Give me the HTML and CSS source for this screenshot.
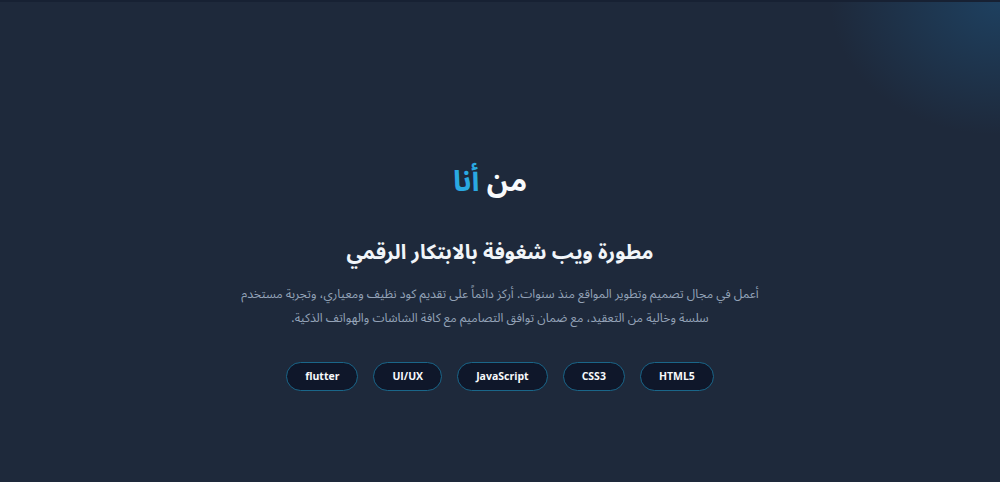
FILE: index.html
```html
<!DOCTYPE html>
<html lang="ar" dir="rtl">
<head>
<meta charset="utf-8">
<link rel="stylesheet" href="styles.css">
</head>
<body>
<section class="about">
  <h2 class="title">من <span class="accent">أنا</span></h2>
  <h3 class="subtitle">مطورة ويب شغوفة بالابتكار الرقمي</h3>
  <p class="desc">أعمل في مجال تصميم وتطوير المواقع منذ سنوات. أركز دائماً على تقديم كود نظيف ومعياري، وتجربة مستخدم سلسة وخالية من التعقيد، مع ضمان توافق التصاميم مع كافة الشاشات والهواتف الذكية.</p>
  <ul class="tags">
    <li class="tag">HTML5</li>
    <li class="tag">CSS3</li>
    <li class="tag">JavaScript</li>
    <li class="tag">UI/UX</li>
    <li class="tag">flutter</li>
  </ul>
</section>
</body>
</html>
```
FILE: styles.css
```css
* { box-sizing: border-box; }
html, body { margin: 0; padding: 0; }
body {
  width: 1000px;
  height: 482px;
  overflow: hidden;
  background-color: #1e293b;
  background-image: radial-gradient(ellipse 170px 135px at 100% 0%, rgba(30, 72, 108, 0.75) 0, rgba(30, 41, 59, 0) 100%);
  border-top: 2px solid #172133;
  font-family: "Noto Sans Arabic", "Noto Sans", sans-serif;
  color: #f1f5f9;
}
.about {
  display: flex;
  flex-direction: column;
  align-items: center;
  padding-top: 162px;
}
.title {
  margin: 0;
  padding-right: 20px;
  font-size: 29px;
  font-weight: 700;
  line-height: 36px;
  color: #f8fafc;
}
.accent { color: #2aa9e2; }
.subtitle {
  margin: 38px 0 0;
  font-size: 20.5px;
  font-weight: 700;
  line-height: 30px;
  color: #f1f5f9;
}
.desc {
  margin: 14px 0 0;
  width: 528px;
  text-align: center;
  font-size: 12.2px;
  line-height: 24px;
  color: #94a3b8;
}
.tags {
  list-style: none;
  margin: 32px 0 0;
  padding: 0;
  display: flex;
  gap: 15px;
}
.tag {
  direction: ltr;
  height: 29px;
  padding: 0 18px;
  border: 1px solid #1a6689;
  border-radius: 15px;
  background: #0f172a;
  font-family: "Open Sans", "Noto Sans", sans-serif;
  font-size: 10.5px;
  font-weight: 700;
  line-height: 27px;
  color: #f8fafc;
}
```
